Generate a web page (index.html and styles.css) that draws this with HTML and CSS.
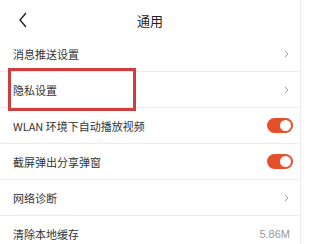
FILE: index.html
```html
<!DOCTYPE html>
<html>
<head>
<meta charset="utf-8">
<link rel="stylesheet" href="styles.css">
</head>
<body>
<div class="page">
  <div class="header">
    <svg class="back" width="10" height="16" viewBox="0 0 10 16"><path d="M8 1 L2 8 L8 15" fill="none" stroke="#222" stroke-width="1.4"/></svg>
    <div class="title">通用</div>
  </div>
  <div class="row"><span class="label">消息推送设置</span><svg class="arrow" width="5" height="8" viewBox="0 0 5 8"><path d="M1 1 L4 4 L1 7" fill="none" stroke="#999" stroke-width="0.9"/></svg></div>
  <div class="row"><span class="label">隐私设置</span><svg class="arrow" width="5" height="8" viewBox="0 0 5 8"><path d="M1 1 L4 4 L1 7" fill="none" stroke="#999" stroke-width="0.9"/></svg></div>
  <div class="row"><span class="label">WLAN 环境下自动播放视频</span><span class="toggle"><span class="knob"></span></span></div>
  <div class="row"><span class="label">截屏弹出分享弹窗</span><span class="toggle"><span class="knob"></span></span></div>
  <div class="row"><span class="label">网络诊断</span><svg class="arrow" width="5" height="8" viewBox="0 0 5 8"><path d="M1 1 L4 4 L1 7" fill="none" stroke="#999" stroke-width="0.9"/></svg></div>
  <div class="row last"><span class="label">清除本地缓存</span><span class="value">5.86M</span></div>
  <div class="highlight"></div>
</div>
</body>
</html>
```
FILE: styles.css
```css
html, body {
  margin: 0;
  padding: 0;
  background: #fff;
}
body {
  font-family: "Noto Sans CJK SC", "Noto Sans", sans-serif;
  overflow: hidden;
}
.page {
  position: relative;
  width: 300px;
  height: 244px;
  border-right: 1px solid #ececec;
  overflow: hidden;
}
.header {
  height: 36px;
  display: flex;
  align-items: center;
  justify-content: center;
  position: relative;
}
.back {
  position: absolute;
  left: 18px;
  top: 12px;
}
.title {
  font-size: 13px;
  color: #222;
  margin-top: 4px;
}
.row {
  box-sizing: border-box;
  height: 36px;
  border-bottom: 1px solid #ededed;
  display: flex;
  align-items: center;
  justify-content: space-between;
  padding: 0 11px 0 13px;
}
.row.last {
  border-bottom: none;
}
.label {
  font-size: 11px;
  color: #333;
}
.arrow {
  margin-right: 0;
}
.value {
  font-family: "Liberation Sans", Arial, sans-serif;
  font-size: 11px;
  color: #999;
  margin-right: -1px;
}
.toggle {
  width: 26px;
  height: 15px;
  border-radius: 8px;
  background: #e5502c;
  display: flex;
  align-items: center;
  justify-content: flex-end;
  margin-right: -4px;
}
.knob {
  width: 11px;
  height: 11px;
  border-radius: 50%;
  background: #fff;
  margin-right: 2px;
}
.highlight {
  position: absolute;
  left: 8px;
  top: 68px;
  width: 122px;
  height: 37px;
  border: 3px solid #cf3d3d;
}
```
